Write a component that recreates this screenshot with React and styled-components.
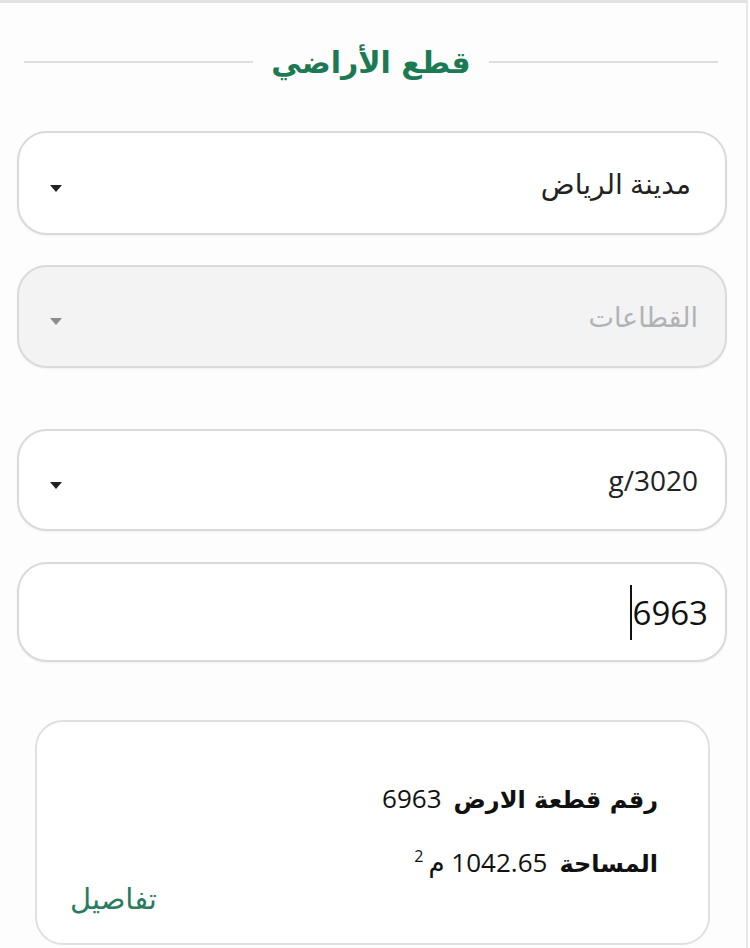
import React from 'react';
import styled, { createGlobalStyle } from 'styled-components';

const GlobalStyle = createGlobalStyle`
  body {
    margin: 0;
    background: #fefdfe;
    font-family: "Open Sans", "DejaVu Sans", sans-serif;
  }
`;

const Page = styled.div`
  direction: rtl;
  box-sizing: border-box;
  width: 748px;
  min-height: 948px;
  border-top: 3px solid #e2e2e2;
  border-right: 2px solid #e8e8e8;
  padding: 0 19px 0 17px;
  display: flex;
  flex-direction: column;
`;

const Header = styled.div`
  display: flex;
  align-items: center;
  gap: 18px;
  height: 54px;
  margin: 32px 9px 42px 7px;
`;

const Rule = styled.div`
  flex: 1;
  height: 2px;
  background: #dedede;
`;

const Title = styled.h1`
  margin: 0;
  font-family: "DejaVu Sans", sans-serif;
  font-size: 30px;
  font-weight: bold;
  color: #1b7a52;
  white-space: nowrap;
`;

const Field = styled.div`
  box-sizing: border-box;
  height: ${(p) => p.$h || 103}px;
  margin-bottom: ${(p) => p.$gap || 0}px;
  border: 2px solid #dadada;
  border-radius: 30px;
  background: ${(p) => (p.$disabled ? '#f3f3f3' : '#fff')};
  box-shadow: 0 1px 2px rgba(0, 0, 0, 0.05);
  display: flex;
  align-items: center;
  justify-content: space-between;
  padding: 0 ${(p) => p.$pr || 30}px 0 31px;
`;

const Value = styled.span`
  font-size: ${(p) => p.$size || 28}px;
  color: ${(p) => (p.$muted ? '#b0b3b6' : '#222')};
`;

const Caret = styled.span`
  width: 0;
  height: 0;
  margin-top: 10px;
  border-left: 6.5px solid transparent;
  border-right: 6.5px solid transparent;
  border-top: 7px solid ${(p) => (p.$muted ? '#8c8c8c' : '#222')};
`;

const InputBox = styled(Field)`
  justify-content: flex-start;
  padding-right: 17px;
`;

const Typed = styled.span`
  display: flex;
  align-items: center;
  font-size: 33px;
  color: #111;
  &::after {
    content: '';
    width: 2px;
    height: 55px;
    margin-right: 1px;
    background: #111;
  }
`;

const Card = styled.div`
  box-sizing: border-box;
  height: 225px;
  margin: 0 17px 0 18px;
  border: 2px solid #e0e0e0;
  border-radius: 28px;
  background: #fff;
  padding: 58px 50px 0 0;
  display: flex;
  flex-direction: column;
`;

const InfoRow = styled.div`
  display: flex;
  align-items: baseline;
  gap: 12px;
  height: 64px;
  color: #111;
`;

const Label = styled.span`
  font-family: "DejaVu Sans", sans-serif;
  font-size: 24px;
  font-weight: bold;
`;

const Num = styled.span`
  font-size: 26px;
  sup {
    font-size: 16px;
    margin-right: 5px;
  }
`;

const DetailsLink = styled.a`
  align-self: flex-end;
  margin: -26px 0 0 33px;
  font-family: "DejaVu Sans", sans-serif;
  font-size: 29px;
  color: #2b7b5f;
  text-decoration: none;
`;

export default function App() {
  return (
    <>
      <GlobalStyle />
      <Page>
        <Header>
          <Rule />
          <Title>قطع الأراضي</Title>
          <Rule />
        </Header>

        <Field $gap={30} $h={104} $pr={34}>
          <Value>مدينة الرياض</Value>
          <Caret />
        </Field>

        <Field $gap={61} $disabled $pr={27}>
          <Value $muted $size={27}>القطاعات</Value>
          <Caret $muted />
        </Field>

        <Field $gap={31} $h={102} $pr={27}>
          <Value $size={28}>g/3020</Value>
          <Caret />
        </Field>

        <InputBox $gap={58} $h={100}>
          <Typed>6963</Typed>
        </InputBox>

        <Card>
          <InfoRow>
            <Label>رقم قطعة الارض</Label>
            <Num>6963</Num>
          </InfoRow>
          <InfoRow>
            <Label>المساحة</Label>
            <Num>1042.65 م<sup>2</sup></Num>
          </InfoRow>
          <DetailsLink href="#">تفاصيل</DetailsLink>
        </Card>
      </Page>
    </>
  );
}
